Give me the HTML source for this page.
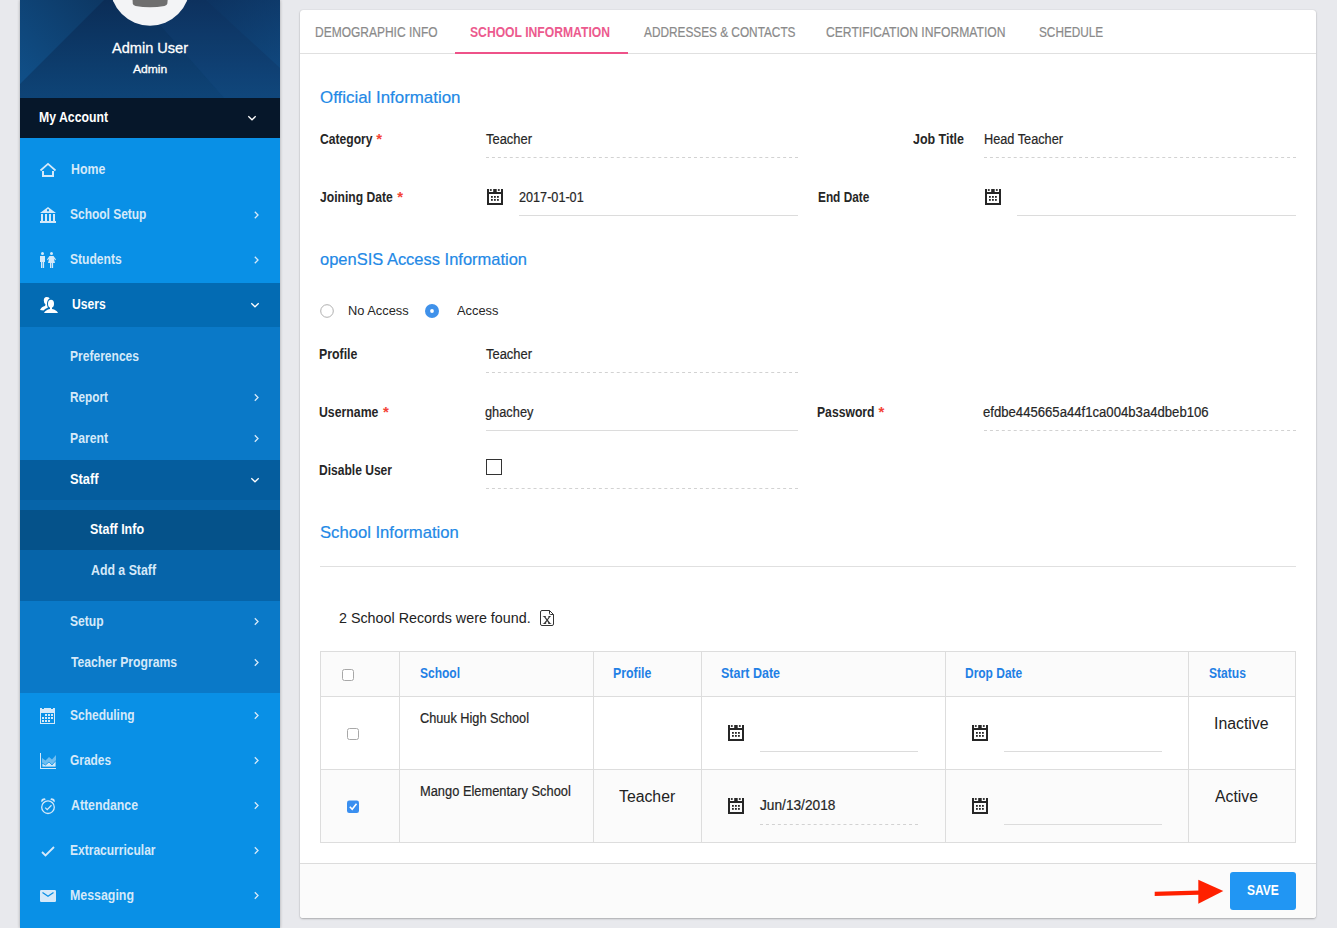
<!DOCTYPE html>
<html><head><meta charset="utf-8">
<style>
html,body{margin:0;padding:0;}
body{width:1337px;height:928px;overflow:hidden;background:#e8e9ed;position:relative;font-family:"Liberation Sans",sans-serif;}
.t{position:absolute;white-space:nowrap;transform-origin:0 0;}
.abs{position:absolute;}
#sb{position:absolute;left:20px;top:0;width:260px;height:928px;background:#0990e6;box-shadow:0 0 3px rgba(0,0,0,.3);overflow:hidden;}
.r{position:absolute;left:0;width:260px;}
#card{position:absolute;left:300px;top:10px;width:1016px;height:908px;background:#fff;border-radius:3px;box-shadow:0 1px 2px rgba(0,0,0,.25),0 0 1px rgba(0,0,0,.2);}
.dash{position:absolute;height:1px;background-image:linear-gradient(to right,#d6d6d6 0,#d6d6d6 3px,transparent 3px);background-size:6px 1px;}
.sol{position:absolute;height:1px;background:#dcdcdc;}
.vl{position:absolute;width:1px;background:#dddddd;}
.hl{position:absolute;height:1px;background:#dddddd;}
svg{position:absolute;overflow:visible;}
</style></head><body>

<!-- SIDEBAR -->
<div id="sb">
  
  <svg style="left:0;top:0" width="260" height="98" viewBox="0 0 260 98">
    <defs>
      <linearGradient id="hg" x1="0" y1="0" x2="0" y2="1"><stop offset="0" stop-color="#0b2d57"/><stop offset="1" stop-color="#0e4477"/></linearGradient>
      <linearGradient id="tl" x1="1" y1="0" x2="0" y2="1"><stop offset="0" stop-color="#0d3763"/><stop offset="1" stop-color="#105089"/></linearGradient>
      <linearGradient id="tr" x1="0" y1="0" x2="1" y2="1"><stop offset="0" stop-color="#0d3462"/><stop offset="1" stop-color="#104c84"/></linearGradient>
    </defs>
    <rect x="0" y="0" width="260" height="98" fill="url(#hg)"/>
    <polygon points="118,0 260,0 260,98 204,98" fill="rgba(40,120,200,0.07)"/>
    <polygon points="186,0 260,0 260,68" fill="url(#tr)" opacity="0.6"/>
    <polygon points="0,0 84,0 0,84" fill="url(#tl)"/>
    <polygon points="0,84 84,0 0,98" fill="rgba(40,120,200,0.0)"/>
    <circle cx="130" cy="-14.1" r="39.8" fill="#f3f4f6"/>
    <path d="M112.4,-2 L147.9,-2 L147.3,3.8 Q147,5.3 144.5,5.9 Q130,8.6 115.5,5.9 Q113,5.3 112.8,3.8 Z" fill="#6f6f6f"/>
  </svg>
  <div class="r" style="top:98px;height:40px;background:#06172a;"></div>
  <div class="r" style="top:283px;height:44px;background:#036bb3;"></div>
  <div class="r" style="top:327px;height:366px;background:#0a79c8;"></div>
  <div class="r" style="top:460px;height:40px;background:#055d9e;"></div>
  <div class="r" style="top:500px;height:101px;background:#0664a9;"></div>
  <div class="r" style="top:510px;height:40px;background:#05528a;"></div>
</div>

<!-- sidebar icons (page coords) -->
<svg style="left:0;top:0" width="300" height="928" viewBox="0 0 300 928">
  <g fill="none" stroke="#d5e9f9" stroke-linecap="butt">
    <!-- chevrons -->
    <polyline points="248.3,116.3 252,119.8 255.7,116.3" stroke="#ffffff" stroke-width="1.3"/>
    <polyline points="254.8,211.8 258,215 254.8,218.2" stroke-width="1.3"/>
    <polyline points="254.8,256.8 258,260 254.8,263.2" stroke-width="1.3"/>
    <polyline points="251.3,303.3 255,306.8 258.7,303.3" stroke="#ffffff" stroke-width="1.3"/>
    <polyline points="254.8,394.3 258,397.5 254.8,400.7" stroke-width="1.3"/>
    <polyline points="254.8,435.3 258,438.5 254.8,441.7" stroke-width="1.3"/>
    <polyline points="251.3,478.3 255,481.8 258.7,478.3" stroke="#ffffff" stroke-width="1.3"/>
    <polyline points="254.8,618.3 258,621.5 254.8,624.7" stroke-width="1.3"/>
    <polyline points="254.8,659.3 258,662.5 254.8,665.7" stroke-width="1.3"/>
    <polyline points="254.8,712.3 258,715.5 254.8,718.7" stroke-width="1.3"/>
    <polyline points="254.8,757.3 258,760.5 254.8,763.7" stroke-width="1.3"/>
    <polyline points="254.8,802.3 258,805.5 254.8,808.7" stroke-width="1.3"/>
    <polyline points="254.8,847.3 258,850.5 254.8,853.7" stroke-width="1.3"/>
    <polyline points="254.8,892.3 258,895.5 254.8,898.7" stroke-width="1.3"/>
  </g>
  <!-- home -->
  <g fill="#d5e9f9">
    <polyline points="40.5,170.5 48,163.8 55.5,170.5" fill="none" stroke="#d5e9f9" stroke-width="1.7"/>
    <rect x="42" y="171" width="2" height="6"/>
    <rect x="52" y="171" width="2" height="6"/>
    <rect x="42" y="175" width="12" height="2"/>
  </g>
  <!-- bank -->
  <g fill="#d5e9f9">
    <path d="M40,213 L48,207 L56,213 Z M47,209.3 v2 h2 v-2 Z" fill-rule="evenodd"/>
    <rect x="41" y="214" width="2" height="7.5"/>
    <rect x="45" y="214" width="2" height="7.5"/>
    <rect x="49" y="214" width="2" height="7.5"/>
    <rect x="53" y="214" width="2" height="7.5"/>
    <rect x="40" y="221" width="16" height="2"/>
  </g>
  <!-- students -->
  <g fill="#d5e9f9">
    <circle cx="42.5" cy="253.5" r="1.5"/>
    <rect x="40" y="256" width="5" height="6"/>
    <rect x="41" y="261" width="1.3" height="7"/>
    <rect x="42.8" y="261" width="1.3" height="7"/>
    <circle cx="51.5" cy="253.5" r="1.5"/>
    <path d="M49.5,256 L53.5,256 L56,259.5 L55.2,260.2 L53.8,258.5 L55,263 L48,263 L49.2,258.5 L47.8,260.2 L47,259.5 Z"/>
    <rect x="50" y="262" width="1.3" height="6"/>
    <rect x="51.8" y="262" width="1.3" height="6"/>
  </g>
  <!-- users -->
  <g fill="#ffffff">
    <path d="M40,310 Q41.5,306.5 45,306 L45.5,304.5 Q43.8,303 43.8,300.5 Q43.8,297 46.5,297 Q48.5,297 49.8,298.3 Q47,300 47,304 Q47,306.5 48,307.5 Q44.5,309 43.5,310.5 Z"/>
    <ellipse cx="51" cy="303.8" rx="3" ry="4"/>
    <rect x="50" y="306" width="2" height="3.5"/>
    <path d="M44,313 Q45.5,309.8 50,309 L52,309 Q56.5,309.8 58,313 Z"/>
  </g>
  <!-- scheduling -->
  <g fill="#d5e9f9">
    <path d="M40,708 h2 v1 h2 v-1 h7 v1 h2 v-1 h2 v16 h-15 Z M41,713 v10 h13 v-10 Z" fill-rule="evenodd"/>
    <rect x="45" y="714" width="2" height="2"/><rect x="48" y="714" width="2" height="2"/><rect x="51" y="714" width="2" height="2"/>
    <rect x="42" y="717" width="2" height="2"/><rect x="45" y="717" width="2" height="2"/><rect x="48" y="717" width="2" height="2"/><rect x="51" y="717" width="2" height="2"/>
    <rect x="42" y="720" width="2" height="2"/><rect x="45" y="720" width="2" height="2"/><rect x="48" y="720" width="2" height="2"/>
  </g>
  <!-- grades -->
  <g>
    <rect x="40" y="753" width="1" height="16" fill="#d5e9f9"/>
    <rect x="40" y="768" width="16" height="1" fill="#d5e9f9"/>
    <path d="M42,758 L45.5,760.5 L49,757 L52,759.5 L56,755 L56,767 L42,767 Z" fill="#d5e9f9" opacity="0.5"/>
    <path d="M42,763 L45.5,765 L49,762 L52,765 L56,760.5 L56,767 L42,767 Z" fill="#d5e9f9" stroke="#0990e6" stroke-width="0.8"/>
  </g>
  <!-- attendance -->
  <g fill="none" stroke="#d5e9f9" stroke-width="1.3">
    <circle cx="48" cy="807.2" r="6.3"/>
    <polyline points="45.2,807.6 47.2,809.6 51.5,805.3"/>
  </g>
  <g fill="#d5e9f9">
    <path d="M41.2,801.5 Q41,798.3 45,798.3 L45.6,799.8 Q43,800.3 41.8,802.2 Z"/>
    <path d="M54.8,801.5 Q55,798.3 51,798.3 L50.4,799.8 Q53,800.3 54.2,802.2 Z"/>
  </g>
  <!-- extracurricular -->
  <polyline points="42,852 45.5,855.5 54,847" fill="none" stroke="#d5e9f9" stroke-width="1.8"/>
  <!-- messaging -->
  <g>
    <rect x="40" y="890" width="16" height="12" rx="1.2" fill="#d5e9f9"/>
    <polyline points="42.5,892.5 48,896.3 53.5,892.5" fill="none" stroke="#0990e6" stroke-width="1.3"/>
  </g>
</svg>

<!-- CARD -->
<div id="card"></div>
<div class="hl" style="left:300px;top:53px;width:1016px;background:#e0e0e0"></div>
<div class="abs" style="left:455px;top:51.5px;width:173px;height:2px;background:#ee5289"></div>

<!-- underlines -->
<div class="sol" style="left:519px;top:215px;width:279px"></div>
<div class="sol" style="left:1017px;top:215px;width:279px"></div>
<div class="sol" style="left:486px;top:430px;width:312px"></div>

<!-- radios -->
<svg style="left:0;top:0" width="1337" height="928">
  <circle cx="327" cy="311" r="6.3" fill="#fff" stroke="#b0b0b0" stroke-width="1"/>
  <circle cx="432" cy="311" r="7" fill="#3f91ea"/>
  <circle cx="432" cy="311" r="1.9" fill="#fff"/>
  <rect x="486.5" y="459.5" width="15" height="15" fill="#fff" stroke="#333" stroke-width="1"/>
</svg>

<!-- hr -->
<div class="hl" style="left:320px;top:566px;width:976px;background:#e0e0e0"></div>

<!-- excel icon -->
<svg style="left:540px;top:610px" width="14" height="16" viewBox="0 0 14 16">
  <path d="M0.5,2 Q0.5,0.5 2,0.5 L9.5,0.5 L13.5,4.5 L13.5,14 Q13.5,15.5 12,15.5 L2,15.5 Q0.5,15.5 0.5,14 Z" fill="none" stroke="#333" stroke-width="1"/>
  <path d="M9.5,0.5 L9.5,3.5 Q9.5,4.5 10.5,4.5 L13.5,4.5" fill="none" stroke="#333" stroke-width="1"/>
  <path d="M2.8,6 L6,6 L6,6.6 L5.3,6.7 L7.2,9.3 L8.8,6.7 L8.2,6.6 L8.2,6 L10.9,6 L10.9,6.6 L10.2,6.7 L7.9,10.1 L10.6,13.4 L11.3,13.5 L11.3,14 L8,14 L8,13.5 L8.6,13.4 L7.1,11.1 L5.7,13.4 L6.3,13.5 L6.3,14 L2.8,14 L2.8,13.5 L3.6,13.4 L6.4,10.2 L3.9,6.7 L2.8,6.6 Z" fill="#333"/>
</svg>

<!-- table -->
<div class="abs" style="left:320.5px;top:651px;width:975px;height:45px;background:#fbfbfb"></div>
<div class="abs" style="left:320.5px;top:769px;width:975px;height:73px;background:#fbfbfb"></div>
<div class="hl" style="left:320px;top:651px;width:976px"></div>
<div class="hl" style="left:320px;top:696px;width:976px"></div>
<div class="hl" style="left:320px;top:769px;width:976px"></div>
<div class="hl" style="left:320px;top:842px;width:976px"></div>
<div class="vl" style="left:320px;top:651px;height:192px"></div>
<div class="vl" style="left:399px;top:651px;height:192px"></div>
<div class="vl" style="left:593px;top:651px;height:192px"></div>
<div class="vl" style="left:701px;top:651px;height:192px"></div>
<div class="vl" style="left:945px;top:651px;height:192px"></div>
<div class="vl" style="left:1188px;top:651px;height:192px"></div>
<div class="vl" style="left:1295px;top:651px;height:192px"></div>

<div class="sol" style="left:760px;top:751px;width:158px"></div>
<div class="sol" style="left:1004px;top:751px;width:158px"></div>
<div class="sol" style="left:1004px;top:824px;width:158px"></div>

<svg style="left:0;top:0" width="1337" height="928">
  <rect x="342.5" y="669.5" width="11" height="11" rx="2" fill="#fff" stroke="#a8a8a8" stroke-width="1"/>
  <rect x="347.5" y="728.5" width="11" height="11" rx="2" fill="#fff" stroke="#a8a8a8" stroke-width="1"/>
  <rect x="347" y="800.5" width="12" height="12.5" rx="2.2" fill="#3a8ff0"/>
  <polyline points="349.8,806.8 352.2,809.3 356.5,803.8" fill="none" stroke="#fff" stroke-width="1.6"/>
</svg>

<!-- calendar icons -->
<svg style="display:none"><defs>
<g id="cal">
  <rect x="0" y="0" width="2" height="16"/><rect x="14" y="0" width="2" height="16"/>
  <rect x="0" y="14" width="16" height="2"/><rect x="0" y="3" width="16" height="2"/>
  <rect x="6.2" y="0" width="3.5" height="3"/>
  <rect x="2.9" y="0.1" width="1.8" height="1.8"/><rect x="10.9" y="0.1" width="1.8" height="1.8"/>
  <rect x="4" y="7" width="1.8" height="1.8"/><rect x="7" y="7" width="1.8" height="1.8"/><rect x="10" y="7" width="1.8" height="1.8"/>
  <rect x="4" y="10" width="1.8" height="1.8"/><rect x="7" y="10" width="1.8" height="1.8"/><rect x="10" y="10" width="1.8" height="1.8"/>
</g></defs></svg>
<svg style="left:487px;top:189px" width="16" height="16"><use href="#cal" fill="#262626"/></svg>
<svg style="left:985px;top:189px" width="16" height="16"><use href="#cal" fill="#262626"/></svg>
<svg style="left:728px;top:725px" width="16" height="16"><use href="#cal" fill="#262626"/></svg>
<svg style="left:971.5px;top:725px" width="16" height="16"><use href="#cal" fill="#262626"/></svg>
<svg style="left:728px;top:798px" width="16" height="16"><use href="#cal" fill="#262626"/></svg>
<svg style="left:971.5px;top:798px" width="16" height="16"><use href="#cal" fill="#262626"/></svg>

<!-- footer -->
<div class="abs" style="left:300px;top:864px;width:1016px;height:54px;background:#fbfbfb;border-radius:0 0 3px 3px"></div>
<div class="hl" style="left:300px;top:863px;width:1016px;background:#dcdcdc"></div>
<div class="abs" style="left:1230px;top:872px;width:66px;height:38px;background:#2196f3;border-radius:3px"></div>
<svg style="left:0;top:0" width="1337" height="928">
  <path d="M1154.7,891.8 L1199,890.6 L1199,894.8 L1154.7,896 Z" fill="#ff2000"/>
  <path d="M1198.3,879.8 L1223.3,891 L1198.3,903.8 Z" fill="#ff2000"/>
</svg>

<svg style="left:0;top:0" width="1337" height="928"><g stroke="#d2d2d2" stroke-width="1"><line x1="486" y1="157.5" x2="798" y2="157.5" stroke-dasharray="3 2.9423"/><line x1="984" y1="157.5" x2="1296" y2="157.5" stroke-dasharray="3 2.9423"/><line x1="486" y1="372.5" x2="798" y2="372.5" stroke-dasharray="3 2.9423"/><line x1="984" y1="430.5" x2="1296" y2="430.5" stroke-dasharray="3 2.9423"/><line x1="486" y1="488.5" x2="798" y2="488.5" stroke-dasharray="3 2.9423"/><line x1="760" y1="824.5" x2="918" y2="824.5" stroke-dasharray="3 2.9615"/></g></svg>
<div class="t" style="left:112.30px;top:40px;font-size:15.5px;line-height:15.5px;font-weight:400;color:#ffffff;transform:scaleX(0.9386);-webkit-text-stroke:0.3px #fff;">Admin User</div>
<div class="t" style="left:132.70px;top:64px;font-size:11.5px;line-height:11.5px;font-weight:400;color:#ffffff;transform:scaleX(1.0518);-webkit-text-stroke:0.3px #fff;">Admin</div>
<div class="t" style="left:39.32px;top:110px;font-size:14px;line-height:14px;font-weight:700;color:#ffffff;transform:scaleX(0.8753);">My Account</div>
<div class="t" style="left:70.62px;top:162px;font-size:14px;line-height:14px;font-weight:700;color:#d5e9f9;transform:scaleX(0.8816);">Home</div>
<div class="t" style="left:70.35px;top:207px;font-size:14px;line-height:14px;font-weight:700;color:#d5e9f9;transform:scaleX(0.8541);">School Setup</div>
<div class="t" style="left:70.14px;top:252px;font-size:14px;line-height:14px;font-weight:700;color:#d5e9f9;transform:scaleX(0.8632);">Students</div>
<div class="t" style="left:72.14px;top:297px;font-size:14px;line-height:14px;font-weight:700;color:#ffffff;transform:scaleX(0.8633);">Users</div>
<div class="t" style="left:70.14px;top:349px;font-size:14px;line-height:14px;font-weight:700;color:#d5e9f9;transform:scaleX(0.8607);">Preferences</div>
<div class="t" style="left:70.16px;top:390px;font-size:14px;line-height:14px;font-weight:700;color:#d5e9f9;transform:scaleX(0.8421);">Report</div>
<div class="t" style="left:70.13px;top:431px;font-size:14px;line-height:14px;font-weight:700;color:#d5e9f9;transform:scaleX(0.8720);">Parent</div>
<div class="t" style="left:70.08px;top:472px;font-size:14px;line-height:14px;font-weight:700;color:#ffffff;transform:scaleX(0.9189);">Staff</div>
<div class="t" style="left:90.11px;top:522px;font-size:14px;line-height:14px;font-weight:700;color:#ffffff;transform:scaleX(0.8903);">Staff Info</div>
<div class="t" style="left:91.00px;top:563px;font-size:14px;line-height:14px;font-weight:700;color:#d5e9f9;transform:scaleX(0.8797);">Add a Staff</div>
<div class="t" style="left:70.14px;top:614px;font-size:14px;line-height:14px;font-weight:700;color:#d5e9f9;transform:scaleX(0.8614);">Setup</div>
<div class="t" style="left:71.00px;top:655px;font-size:14px;line-height:14px;font-weight:700;color:#d5e9f9;transform:scaleX(0.8695);">Teacher Programs</div>
<div class="t" style="left:70.14px;top:708px;font-size:14px;line-height:14px;font-weight:700;color:#d5e9f9;transform:scaleX(0.8562);">Scheduling</div>
<div class="t" style="left:70.15px;top:753px;font-size:14px;line-height:14px;font-weight:700;color:#d5e9f9;transform:scaleX(0.8497);">Grades</div>
<div class="t" style="left:71.00px;top:798px;font-size:14px;line-height:14px;font-weight:700;color:#d5e9f9;transform:scaleX(0.8789);">Attendance</div>
<div class="t" style="left:70.14px;top:843px;font-size:14px;line-height:14px;font-weight:700;color:#d5e9f9;transform:scaleX(0.8584);">Extracurricular</div>
<div class="t" style="left:70.12px;top:888px;font-size:14px;line-height:14px;font-weight:700;color:#d5e9f9;transform:scaleX(0.8845);">Messaging</div>
<div class="t" style="left:315.34px;top:25px;font-size:14px;line-height:14px;font-weight:400;color:#8a8a8a;transform:scaleX(0.8566);-webkit-text-stroke:0.2px #8a8a8a;">DEMOGRAPHIC INFO</div>
<div class="t" style="left:470.33px;top:25px;font-size:14px;line-height:14px;font-weight:700;color:#ec5a8e;transform:scaleX(0.8681);">SCHOOL INFORMATION</div>
<div class="t" style="left:644.30px;top:25px;font-size:14px;line-height:14px;font-weight:400;color:#8a8a8a;transform:scaleX(0.8443);-webkit-text-stroke:0.2px #8a8a8a;">ADDRESSES &amp; CONTACTS</div>
<div class="t" style="left:826.43px;top:25px;font-size:14px;line-height:14px;font-weight:400;color:#8a8a8a;transform:scaleX(0.8676);-webkit-text-stroke:0.2px #8a8a8a;">CERTIFICATION INFORMATION</div>
<div class="t" style="left:1038.56px;top:25px;font-size:14px;line-height:14px;font-weight:400;color:#8a8a8a;transform:scaleX(0.8420);-webkit-text-stroke:0.2px #8a8a8a;">SCHEDULE</div>
<div class="t" style="left:319.81px;top:89px;font-size:17px;line-height:17px;font-weight:400;color:#2389e6;transform:scaleX(0.9935);-webkit-text-stroke:0.2px #2389e6;">Official Information</div>
<div class="t" style="left:319.73px;top:251px;font-size:17px;line-height:17px;font-weight:400;color:#2389e6;transform:scaleX(0.9693);-webkit-text-stroke:0.2px #2389e6;">openSIS Access Information</div>
<div class="t" style="left:319.72px;top:524px;font-size:17px;line-height:17px;font-weight:400;color:#2389e6;transform:scaleX(0.9785);-webkit-text-stroke:0.2px #2389e6;">School Information</div>
<div class="t" style="left:319.63px;top:132px;font-size:14px;line-height:14px;font-weight:700;color:#262626;transform:scaleX(0.8651);">Category</div>
<div class="t" style="left:320.40px;top:190px;font-size:14px;line-height:14px;font-weight:700;color:#262626;transform:scaleX(0.8653);">Joining Date</div>
<div class="t" style="left:912.80px;top:132px;font-size:14px;line-height:14px;font-weight:700;color:#262626;transform:scaleX(0.8899);">Job Title</div>
<div class="t" style="left:817.85px;top:190px;font-size:14px;line-height:14px;font-weight:700;color:#262626;transform:scaleX(0.8453);">End Date</div>
<div class="t" style="left:319.42px;top:347px;font-size:14px;line-height:14px;font-weight:700;color:#262626;transform:scaleX(0.8812);">Profile</div>
<div class="t" style="left:319.42px;top:405px;font-size:14px;line-height:14px;font-weight:700;color:#262626;transform:scaleX(0.8774);">Username</div>
<div class="t" style="left:319.44px;top:463px;font-size:14px;line-height:14px;font-weight:700;color:#262626;transform:scaleX(0.8606);">Disable User</div>
<div class="t" style="left:817.13px;top:405px;font-size:14px;line-height:14px;font-weight:700;color:#262626;transform:scaleX(0.8694);">Password</div>
<div class="t" style="left:486.20px;top:132px;font-size:14px;line-height:14px;font-weight:400;color:#262626;transform:scaleX(0.9235);-webkit-text-stroke:0.2px #262626;">Teacher</div>
<div class="t" style="left:518.50px;top:190px;font-size:14px;line-height:14px;font-weight:400;color:#262626;transform:scaleX(0.9033);-webkit-text-stroke:0.2px #262626;">2017-01-01</div>
<div class="t" style="left:983.59px;top:132px;font-size:14px;line-height:14px;font-weight:400;color:#262626;transform:scaleX(0.9089);-webkit-text-stroke:0.2px #262626;">Head Teacher</div>
<div class="t" style="left:486.00px;top:347px;font-size:14px;line-height:14px;font-weight:400;color:#262626;transform:scaleX(0.9235);-webkit-text-stroke:0.2px #262626;">Teacher</div>
<div class="t" style="left:485.09px;top:405px;font-size:14px;line-height:14px;font-weight:400;color:#262626;transform:scaleX(0.9143);-webkit-text-stroke:0.2px #262626;">ghachey</div>
<div class="t" style="left:983.06px;top:405px;font-size:14px;line-height:14px;font-weight:400;color:#262626;transform:scaleX(0.9377);-webkit-text-stroke:0.2px #262626;">efdbe445665a44f1ca004b3a4dbeb106</div>
<div class="t" style="left:347.71px;top:304px;font-size:13px;line-height:13px;font-weight:400;color:#262626;transform:scaleX(0.9882);">No Access</div>
<div class="t" style="left:457.00px;top:304px;font-size:13px;line-height:13px;font-weight:400;color:#262626;transform:scaleX(0.9879);">Access</div>
<div class="t" style="left:339.15px;top:610px;font-size:15px;line-height:15px;font-weight:400;color:#222;transform:scaleX(0.9535);">2 School Records were found.</div>
<div class="t" style="left:419.84px;top:666px;font-size:14px;line-height:14px;font-weight:700;color:#1f80e5;transform:scaleX(0.8570);">School</div>
<div class="t" style="left:613.02px;top:666px;font-size:14px;line-height:14px;font-weight:700;color:#1f80e5;transform:scaleX(0.8812);">Profile</div>
<div class="t" style="left:721.21px;top:666px;font-size:14px;line-height:14px;font-weight:700;color:#1f80e5;transform:scaleX(0.8920);">Start Date</div>
<div class="t" style="left:964.95px;top:666px;font-size:14px;line-height:14px;font-weight:700;color:#1f80e5;transform:scaleX(0.8549);">Drop Date</div>
<div class="t" style="left:1208.54px;top:666px;font-size:14px;line-height:14px;font-weight:700;color:#1f80e5;transform:scaleX(0.8645);">Status</div>
<div class="t" style="left:420.29px;top:711px;font-size:14px;line-height:14px;font-weight:400;color:#262626;transform:scaleX(0.9094);-webkit-text-stroke:0.2px #262626;">Chuuk High School</div>
<div class="t" style="left:420.28px;top:784px;font-size:14px;line-height:14px;font-weight:400;color:#262626;transform:scaleX(0.9184);-webkit-text-stroke:0.2px #262626;">Mango Elementary School</div>
<div class="t" style="left:619.30px;top:789px;font-size:16px;line-height:16px;font-weight:400;color:#222;transform:scaleX(0.9873);">Teacher</div>
<div class="t" style="left:760.00px;top:798px;font-size:14px;line-height:14px;font-weight:400;color:#262626;transform:scaleX(0.9782);-webkit-text-stroke:0.2px #262626;">Jun/13/2018</div>
<div class="t" style="left:1213.61px;top:716px;font-size:16px;line-height:16px;font-weight:400;color:#222;transform:scaleX(0.9902);">Inactive</div>
<div class="t" style="left:1214.60px;top:789px;font-size:16px;line-height:16px;font-weight:400;color:#222;transform:scaleX(0.9844);">Active</div>
<div class="t" style="left:1246.54px;top:883px;font-size:14px;line-height:14px;font-weight:700;color:#ffffff;transform:scaleX(0.8573);">SAVE</div>
<div class="t" style="left:376.3px;top:131px;font-size:15px;line-height:15px;font-weight:700;color:#f44336">*</div>
<div class="t" style="left:397.2px;top:189px;font-size:15px;line-height:15px;font-weight:700;color:#f44336">*</div>
<div class="t" style="left:383.1px;top:404px;font-size:15px;line-height:15px;font-weight:700;color:#f44336">*</div>
<div class="t" style="left:878.5px;top:404px;font-size:15px;line-height:15px;font-weight:700;color:#f44336">*</div>

</body></html>
